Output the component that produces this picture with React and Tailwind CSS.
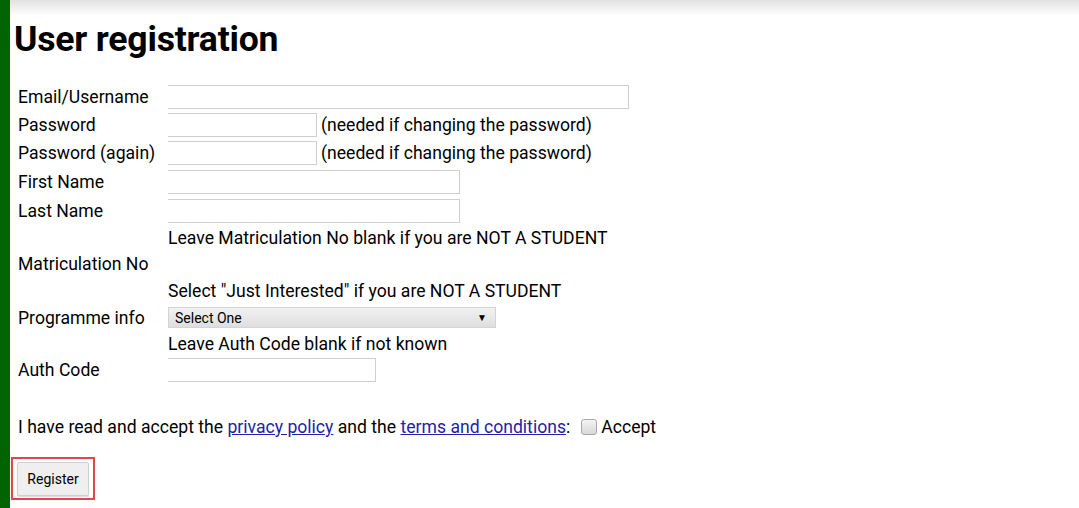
import React from 'react'

const font = { fontFamily: 'Roboto, "Noto Sans", sans-serif' }

const Field = ({ w, note }) => (
    <div className="flex items-center">
        <input type="text" className={`${w} h-[24px] bg-white border border-[#cfcfcf] border-l-0 outline-none`} />
        {note && <span className="ml-[4px] whitespace-nowrap">{note}</span>}
    </div>
)

const Row = ({ h, label, children }) => (
    <div className={`flex items-center ${h}`}>
        <div className="w-[150px] shrink-0 whitespace-nowrap">{label}</div>
        <div className="flex items-center">{children}</div>
    </div>
)

export default function App() {
    return (
        <div className="min-h-screen bg-white text-black flex text-[17.6px] leading-[20px]" style={font}>
            <div className="w-[10px] shrink-0 bg-[#006400]" />
            <div className="flex-1 relative">
                {/* top shade */}
                <div className="absolute top-0 left-0 right-0 h-[16px] bg-gradient-to-b from-[#e2e2e2] to-white pointer-events-none" />
                <div className="relative pl-[8px]">
                    <h1 className="pt-[19px] h-[82px] ml-[-4px] text-[35.6px] leading-[40px] font-bold tracking-[-0.2px]">User registration</h1>

                    <Row h="h-[29px]" label="Email/Username"><Field w="w-[461px]" /></Row>
                    <Row h="h-[28px]" label="Password"><Field w="w-[149px]" note="(needed if changing the password)" /></Row>
                    <Row h="h-[28px]" label="Password (again)"><Field w="w-[149px]" note="(needed if changing the password)" /></Row>
                    <Row h="h-[29px]" label="First Name"><Field w="w-[292px]" /></Row>
                    <Row h="h-[29px]" label="Last Name"><Field w="w-[292px]" /></Row>
                    <Row h="h-[26px]" label=""><span className="whitespace-nowrap">Leave Matriculation No blank if you are NOT A STUDENT</span></Row>
                    <Row h="h-[26px]" label="Matriculation No" />
                    <Row h="h-[27px]" label=""><span className="whitespace-nowrap">Select "Just Interested" if you are NOT A STUDENT</span></Row>
                    <Row h="h-[27px]" label="Programme info">
                        <div className="w-[328px] h-[21px] flex items-center justify-between px-[6px] bg-gradient-to-b from-[#f2f2f2] to-[#dedede] border border-[#d4d4d4] text-[14px] leading-[16px]">
                            <span>Select One</span>
                            <span className="text-[10px] mr-[2px]">▼</span>
                        </div>
                    </Row>
                    <Row h="h-[26px]" label=""><span className="whitespace-nowrap">Leave Auth Code blank if not known</span></Row>
                    <Row h="h-[25px]" label="Auth Code"><Field w="w-[208px]" /></Row>

                    <div className="mt-[34px] flex items-center whitespace-nowrap h-[22px]">
                        <span>I have read and accept the&nbsp;</span>
                        <a href="#" className="text-[#2222aa] underline">privacy policy</a>
                        <span>&nbsp;and the&nbsp;</span>
                        <a href="#" className="text-[#2222aa] underline">terms and conditions</a>
                        <span>:</span>
                        <span className="ml-[11px] w-[16px] h-[16px] rounded-[3px] border border-[#a8a8a8] bg-gradient-to-b from-[#f4f4f4] to-[#d8d8d8]" />
                        <span className="ml-[4px]">Accept</span>
                    </div>

                    <div className="mt-[19px] ml-[-7px] w-[84px] h-[43px] border-2 border-[#e04848] flex items-center justify-center">
                        <button className="w-[72px] h-[34px] bg-[#efefef] border border-[#d0d0d0] rounded-[2px] text-[14px] shadow-[0_1px_1px_rgba(0,0,0,0.15)]" style={font}>Register</button>
                    </div>
                </div>
            </div>
        </div>
    )
}
